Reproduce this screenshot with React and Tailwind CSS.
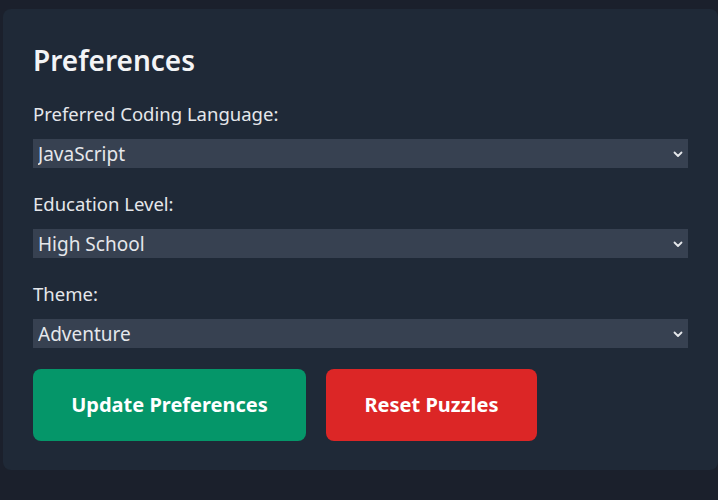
import React from "react";

const Chevron = () => (
  <svg
    className="pointer-events-none absolute right-[4px] top-1/2 -translate-y-1/2"
    width="12"
    height="12"
    viewBox="0 0 12 12"
    fill="none"
  >
    <path d="M2.5 4.5 L6 8 L9.5 4.5" stroke="#e5e7eb" strokeWidth="1.8" strokeLinecap="round" strokeLinejoin="round" />
  </svg>
);

const Field = ({ label, value, options, first }) => (
  <div className={first ? "" : "mt-[24px]"}>
    <label className="block text-[18.5px] leading-[24px] text-[#e5e7eb]">{label}</label>
    <div className="relative mt-[13px]">
      <select
        defaultValue={value}
        className="block h-[29px] w-full appearance-none bg-[#374151] px-[5px] pt-[1px] text-[19px] leading-[28px] text-[#e5e7eb] outline-none"
      >
        {options.map((o) => (
          <option key={o}>{o}</option>
        ))}
      </select>
      <Chevron />
    </div>
  </div>
);

export default function App() {
  return (
    <div
      className="min-h-[500px] bg-[#1b202c] pl-[3px] pt-[9px]"
      style={{ fontFamily: '"Noto Sans", "Open Sans", sans-serif' }}
    >
      <div className="w-[715px] rounded-lg bg-[#1f2937] pl-[30px] pr-[30px] pt-[34px] pb-[29px]">
        <h2 className="mb-[25px] text-[28px] font-semibold leading-[34px] text-[#f3f4f6]">Preferences</h2>
        <Field
          first
          label="Preferred Coding Language:"
          value="JavaScript"
          options={["JavaScript", "Python", "Java", "C++"]}
        />
        <Field
          label="Education Level:"
          value="High School"
          options={["Middle School", "High School", "College"]}
        />
        <Field label="Theme:" value="Adventure" options={["Adventure", "Mystery", "Space"]} />
        <div className="mt-[21px] flex gap-[20px]">
          <button className="h-[72px] w-[273px] rounded-lg bg-[#059669] text-[20px] font-bold text-white">
            Update Preferences
          </button>
          <button className="h-[72px] w-[211px] rounded-lg bg-[#dc2626] text-[20px] font-bold text-white">
            Reset Puzzles
          </button>
        </div>
      </div>
    </div>
  );
}
